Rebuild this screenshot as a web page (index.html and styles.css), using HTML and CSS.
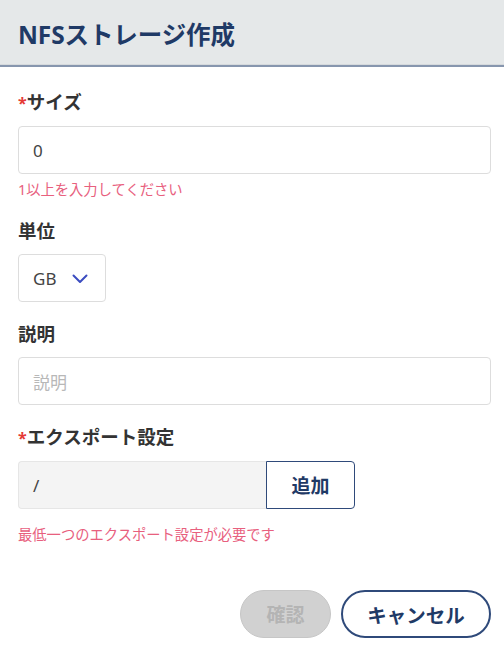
FILE: index.html
```html
<!DOCTYPE html>
<html lang="ja">
<head>
<meta charset="utf-8">
<title>NFSストレージ作成</title>
<link rel="stylesheet" href="styles.css">
</head>
<body>
<div class="dialog">
  <div class="dialog-header">
    <h1 class="dialog-title">NFSストレージ作成</h1>
  </div>
  <div class="dialog-body">
    <div class="field">
      <label class="field-label"><span class="req">*</span>サイズ</label>
      <div class="text-input"><span class="value">0</span></div>
      <div class="error error-tight">1以上を入力してください</div>
    </div>
    <div class="field">
      <label class="field-label">単位</label>
      <div class="select">
        <span class="value">GB</span>
        <svg class="chevron" width="16" height="10" viewBox="0 0 16 10"><path d="M1.5 1.5 L8 8 L14.5 1.5" fill="none" stroke="#3b4cc0" stroke-width="2" stroke-linecap="round" stroke-linejoin="round"/></svg>
      </div>
    </div>
    <div class="field">
      <label class="field-label">説明</label>
      <div class="text-input"><span class="placeholder">説明</span></div>
    </div>
    <div class="field field-last">
      <label class="field-label"><span class="req">*</span>エクスポート設定</label>
      <div class="export-row">
        <div class="export-input"><span class="value">/</span></div>
        <button class="add-btn">追加</button>
      </div>
      <div class="error error-loose">最低一つのエクスポート設定が必要です</div>
    </div>
  </div>
  <div class="dialog-footer">
    <button class="btn btn-disabled">確認</button>
    <button class="btn btn-outline">キャンセル</button>
  </div>
</div>
</body>
</html>
```

FILE: styles.css
```css
* { box-sizing: border-box; }
html, body {
  margin: 0;
  padding: 0;
  background: #ffffff;
}
body {
  font-family: "Noto Sans", "Noto Sans CJK JP", sans-serif;
  color: #333333;
  width: 504px;
  height: 661px;
  overflow: hidden;
}
.dialog {
  display: flex;
  flex-direction: column;
  height: 661px;
}
.dialog-header {
  height: 67px;
  background: #e5e8e9;
  border-bottom: 2px solid #8796ae;
  box-shadow: inset 0 -1px 0 #d6dadd;
  display: flex;
  align-items: center;
  padding: 0 18px;
}
.dialog-title {
  margin: 0;
  margin-top: 2px;
  font-size: 24.5px;
  font-weight: 700;
  color: #1f3a66;
  letter-spacing: -0.1px;
}
.dialog-body {
  padding: 23px 13px 0 18px;
}
.field {
  margin-bottom: 20px;
}
.field-last {
  margin-bottom: 0;
}
.field-label {
  display: block;
  font-size: 18.5px;
  line-height: 24px;
  font-weight: 700;
  color: #333333;
  margin-bottom: 11px;
}
.req {
  color: #e53935;
  font-size: 16px;
}
.text-input {
  height: 48px;
  border: 1px solid #dddddd;
  border-radius: 4px;
  display: flex;
  align-items: center;
  padding: 0 14px;
  font-size: 17px;
}
.value {
  color: #444444;
}
.placeholder {
  color: #b8b8b8;
}
.error {
  font-size: 14.3px;
  line-height: 20px;
  color: #e8607e;
}
.error-tight {
  margin-top: 6px;
  margin-bottom: -1px;
}
.error-loose {
  margin-top: 16px;
}
.select {
  width: 88px;
  height: 48px;
  border: 1px solid #dddddd;
  border-radius: 4px;
  display: flex;
  align-items: center;
  padding: 0 14px;
  gap: 16px;
  font-size: 17px;
}
.chevron {
  display: block;
  margin-top: 1px;
}
.export-row {
  display: flex;
  height: 48px;
}
.export-input {
  width: 248px;
  background: #f4f4f4;
  border: 1px solid #e6e6e6;
  border-right: none;
  border-radius: 4px 0 0 4px;
  display: flex;
  align-items: center;
  padding: 0 14px;
  font-size: 17px;
}
.add-btn {
  width: 89px;
  height: 48px;
  background: #ffffff;
  border: 1px solid #2f4a7a;
  border-radius: 0 4px 4px 0;
  font-family: inherit;
  font-size: 19px;
  font-weight: 700;
  color: #1f3a66;
  padding: 0;
}
.dialog-footer {
  display: flex;
  justify-content: flex-end;
  gap: 10px;
  padding: 45px 13px 0 18px;
}
.btn {
  height: 48px;
  border-radius: 24px;
  font-family: inherit;
  font-size: 19px;
  font-weight: 700;
  padding: 0;
}
.btn-disabled {
  width: 91px;
  background: #d1d1d1;
  border: 1px solid #c6c6c6;
  color: #b4b4b4;
}
.btn-outline {
  width: 150px;
  background: #ffffff;
  border: 2px solid #2f4a7a;
  color: #1f3a66;
  font-size: 19.5px;
}
```
